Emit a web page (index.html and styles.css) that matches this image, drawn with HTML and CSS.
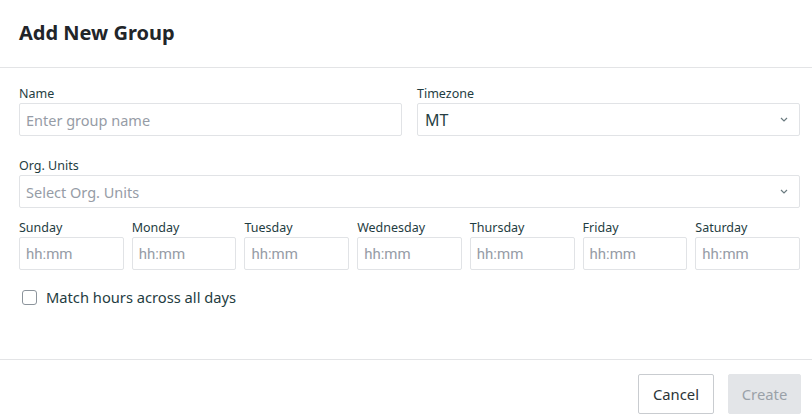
FILE: index.html
```html
<!DOCTYPE html>
<html>
<head>
<meta charset="utf-8">
<link rel="stylesheet" href="styles.css">
</head>
<body>
<div class="modal">
  <div class="header"><h1 class="title">Add New Group</h1></div>
  <div class="body">
    <div class="row two">
      <div class="field">
        <label class="label">Name</label>
        <div class="input placeholder">Enter group name</div>
      </div>
      <div class="field">
        <label class="label">Timezone</label>
        <div class="input select value">MT<svg class="chev" width="8" height="5" viewBox="0 0 8 5"><path d="M1 1l3 3 3-3" fill="none" stroke="#6b7b80" stroke-width="1.2"/></svg></div>
      </div>
    </div>
    <div class="field org">
      <label class="label">Org. Units</label>
      <div class="input select placeholder">Select Org. Units<svg class="chev" width="8" height="5" viewBox="0 0 8 5"><path d="M1 1l3 3 3-3" fill="none" stroke="#6b7b80" stroke-width="1.2"/></svg></div>
    </div>
    <div class="days">
      <div class="field"><label class="label">Sunday</label><div class="input day placeholder">hh:mm</div></div>
      <div class="field"><label class="label">Monday</label><div class="input day placeholder">hh:mm</div></div>
      <div class="field"><label class="label">Tuesday</label><div class="input day placeholder">hh:mm</div></div>
      <div class="field"><label class="label">Wednesday</label><div class="input day placeholder">hh:mm</div></div>
      <div class="field"><label class="label">Thursday</label><div class="input day placeholder">hh:mm</div></div>
      <div class="field"><label class="label">Friday</label><div class="input day placeholder">hh:mm</div></div>
      <div class="field"><label class="label">Saturday</label><div class="input day placeholder">hh:mm</div></div>
    </div>
    <div class="check">
      <span class="box"></span>
      <span class="check-text">Match hours across all days</span>
    </div>
  </div>
  <div class="footer">
    <button class="btn cancel">Cancel</button>
    <button class="btn create">Create</button>
  </div>
</div>
</body>
</html>
```
FILE: styles.css
```css
html, body {
  margin: 0;
  padding: 0;
  background: #fff;
}
body {
  font-family: "Noto Sans", "Open Sans", sans-serif;
  color: #1f3a3e;
}
.modal {
  width: 812px;
  height: 419px;
  display: flex;
  flex-direction: column;
}
.header {
  height: 68px;
  box-sizing: border-box;
  border-bottom: 1px solid #e3e4e6;
  padding: 0 19px;
  display: flex;
  align-items: center;
}
.title {
  margin: 0;
  font-size: 20px;
  font-weight: 700;
  color: #222529;
  position: relative;
  top: -1px;
}
.body {
  padding: 18px 12px 0 19px;
  flex: 1;
}
.row.two {
  display: grid;
  grid-template-columns: 1fr 1fr;
  gap: 15px;
}
.field {
  display: flex;
  flex-direction: column;
  min-width: 0;
}
.label {
  font-size: 12.5px;
  line-height: 16px;
  color: #1f3d42;
  margin-bottom: 1px;
}
.input {
  height: 33px;
  box-sizing: border-box;
  border: 1px solid #e1e3e6;
  border-radius: 2px;
  padding: 0 6px;
  display: flex;
  align-items: center;
  font-size: 14.5px;
}
.placeholder {
  color: #969ca6;
}
.value {
  color: #273f44;
  font-size: 16px;
  padding-left: 7px;
}
.select {
  justify-content: space-between;
  padding-right: 11px;
}
.chev {
  flex: none;
}
.org {
  margin-top: 22px;
}
.days {
  margin-top: 12px;
  display: grid;
  grid-template-columns: repeat(7, 1fr);
  gap: 8px;
}
.input.day {
  font-family: Roboto, "Noto Sans", sans-serif;
  font-size: 15px;
}
.check {
  margin-top: 17px;
  display: flex;
  align-items: center;
  gap: 9px;
  padding-left: 3px;
}
.box {
  width: 15px;
  height: 15px;
  border: 1px solid #8c949c;
  border-radius: 3px;
  box-sizing: border-box;
}
.check-text {
  font-size: 14.7px;
  line-height: 20px;
  color: #1f3d42;
}
.footer {
  height: 60px;
  box-sizing: border-box;
  border-top: 1px solid #e3e4e6;
  display: flex;
  justify-content: flex-end;
  align-items: flex-start;
  gap: 14px;
  padding: 14px 11px 0 0;
}
.btn {
  height: 40px;
  font-family: "Noto Sans", "Open Sans", sans-serif;
  font-size: 14.8px;
  border-radius: 2px;
  padding: 0;
}
.cancel {
  background: #fff;
  border: 1px solid #c9ccd0;
  color: #2b3538;
  width: 76px;
}
.create {
  background: #e3e5e8;
  border: 1px solid #e3e5e8;
  color: #9aa1a8;
  width: 73px;
}
```
